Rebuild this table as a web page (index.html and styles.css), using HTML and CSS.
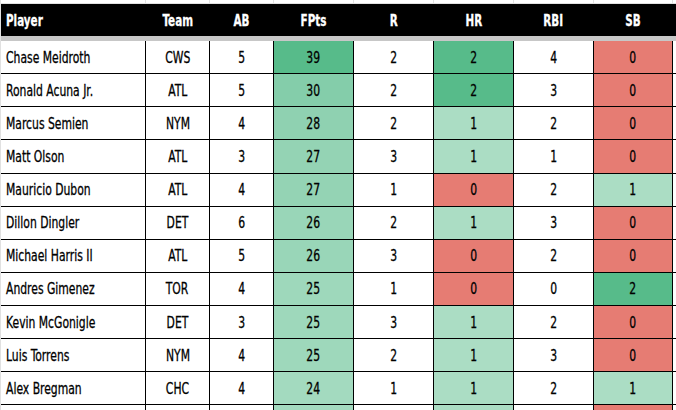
FILE: index.html
```html
<!DOCTYPE html>
<html>
<head>
<meta charset="utf-8">
<link rel="stylesheet" href="styles.css">
</head>
<body>
<div class="sheet">
  <div class="row top">
    <div class="c"></div><div class="c"></div><div class="c"></div><div class="c"></div><div class="c"></div><div class="c"></div><div class="c"></div><div class="c"></div>
  </div>
  <div class="row head">
    <div class="c name"><span>Player</span></div><div class="c"><span>Team</span></div><div class="c"><span>AB</span></div><div class="c"><span>FPts</span></div><div class="c"><span>R</span></div><div class="c"><span>HR</span></div><div class="c"><span>RBI</span></div><div class="c"><span>SB</span></div>
  </div>
  <div class="divider"></div>
  <div class="body">
    <div class="row"><div class="c name"><span>Chase Meidroth</span></div><div class="c"><span>CWS</span></div><div class="c"><span>5</span></div><div class="c f39"><span>39</span></div><div class="c"><span>2</span></div><div class="c g2"><span>2</span></div><div class="c"><span>4</span></div><div class="c red"><span>0</span></div></div>
    <div class="row"><div class="c name"><span>Ronald Acuna Jr.</span></div><div class="c"><span>ATL</span></div><div class="c"><span>5</span></div><div class="c f30"><span>30</span></div><div class="c"><span>2</span></div><div class="c g2"><span>2</span></div><div class="c"><span>3</span></div><div class="c red"><span>0</span></div></div>
    <div class="row"><div class="c name"><span>Marcus Semien</span></div><div class="c"><span>NYM</span></div><div class="c"><span>4</span></div><div class="c f28"><span>28</span></div><div class="c"><span>2</span></div><div class="c g1"><span>1</span></div><div class="c"><span>2</span></div><div class="c red"><span>0</span></div></div>
    <div class="row"><div class="c name"><span>Matt Olson</span></div><div class="c"><span>ATL</span></div><div class="c"><span>3</span></div><div class="c f27"><span>27</span></div><div class="c"><span>3</span></div><div class="c g1"><span>1</span></div><div class="c"><span>1</span></div><div class="c red"><span>0</span></div></div>
    <div class="row"><div class="c name"><span>Mauricio Dubon</span></div><div class="c"><span>ATL</span></div><div class="c"><span>4</span></div><div class="c f27"><span>27</span></div><div class="c"><span>1</span></div><div class="c red"><span>0</span></div><div class="c"><span>2</span></div><div class="c g1"><span>1</span></div></div>
    <div class="row"><div class="c name"><span>Dillon Dingler</span></div><div class="c"><span>DET</span></div><div class="c"><span>6</span></div><div class="c f26"><span>26</span></div><div class="c"><span>2</span></div><div class="c g1"><span>1</span></div><div class="c"><span>3</span></div><div class="c red"><span>0</span></div></div>
    <div class="row"><div class="c name"><span>Michael Harris II</span></div><div class="c"><span>ATL</span></div><div class="c"><span>5</span></div><div class="c f26"><span>26</span></div><div class="c"><span>3</span></div><div class="c red"><span>0</span></div><div class="c"><span>2</span></div><div class="c red"><span>0</span></div></div>
    <div class="row"><div class="c name"><span>Andres Gimenez</span></div><div class="c"><span>TOR</span></div><div class="c"><span>4</span></div><div class="c f25"><span>25</span></div><div class="c"><span>1</span></div><div class="c red"><span>0</span></div><div class="c"><span>0</span></div><div class="c g2"><span>2</span></div></div>
    <div class="row"><div class="c name"><span>Kevin McGonigle</span></div><div class="c"><span>DET</span></div><div class="c"><span>3</span></div><div class="c f25"><span>25</span></div><div class="c"><span>3</span></div><div class="c g1"><span>1</span></div><div class="c"><span>2</span></div><div class="c red"><span>0</span></div></div>
    <div class="row"><div class="c name"><span>Luis Torrens</span></div><div class="c"><span>NYM</span></div><div class="c"><span>4</span></div><div class="c f25"><span>25</span></div><div class="c"><span>2</span></div><div class="c g1"><span>1</span></div><div class="c"><span>3</span></div><div class="c red"><span>0</span></div></div>
    <div class="row"><div class="c name"><span>Alex Bregman</span></div><div class="c"><span>CHC</span></div><div class="c"><span>4</span></div><div class="c f24"><span>24</span></div><div class="c"><span>1</span></div><div class="c g1"><span>1</span></div><div class="c"><span>2</span></div><div class="c g1"><span>1</span></div></div>
    <div class="row"><div class="c name"></div><div class="c"></div><div class="c"></div><div class="c f24"></div><div class="c"></div><div class="c g1"></div><div class="c"></div><div class="c red"></div></div>
  </div>
</div>
</body>
</html>
```

FILE: styles.css
```css
html, body {
  margin: 0;
  padding: 0;
  background: #ffffff;
  overflow: hidden;
}
body {
  width: 676px;
  height: 410px;
}
.sheet {
  border-left: 1px solid #e1e1e1;
  width: 675px;
  height: 410px;
  overflow: hidden;
  font-family: "DejaVu Sans Condensed", "DejaVu Sans", sans-serif;
  font-stretch: condensed;
  color: #000;
}
.row {
  display: grid;
  grid-template-columns: 145px 64px 64px 80px 80px 80px 80px 79px;
  box-sizing: border-box;
}
.c {
  box-sizing: border-box;
  border-right: 1px solid #000;
  display: flex;
  align-items: center;
  justify-content: center;
  white-space: nowrap;
  overflow: hidden;
}
.c span {
  display: inline-block;
  transform: scaleX(0.75);
  transform-origin: center;
  -webkit-text-stroke: 0.3px #000;
}
.c.name {
  justify-content: flex-start;
  padding-left: 5px;
}
.c.name span {
  transform-origin: left center;
}
.top {
  height: 4px;
  border-bottom: 1px solid #e1e1e1;
}
.top .c {
  border-right-color: #e1e1e1;
}
.head {
  height: 32px;
  background: #000;
  color: #fff;
  font-weight: bold;
  font-size: 16.5px;
  padding-top: 1px;
}
.head .c span {
  transform: scaleX(0.7);
  -webkit-text-stroke: 0.3px #fff;
}
.divider {
  height: 5px;
  background: #c7c7c7;
}
.body .row {
  height: 33.13px;
  border-bottom: 1px solid #000;
  font-size: 16px;
}
.f39 { background: #57bb8a; }
.f30 { background: #84cdaa; }
.f28 { background: #8fd1b1; }
.f27 { background: #94d3b4; }
.f26 { background: #99d6b8; }
.f25 { background: #9ed8bb; }
.f24 { background: #a3dabf; }
.g2 { background: #57bb8a; }
.g1 { background: #abddc4; }
.red { background: #e67c73; }
```
